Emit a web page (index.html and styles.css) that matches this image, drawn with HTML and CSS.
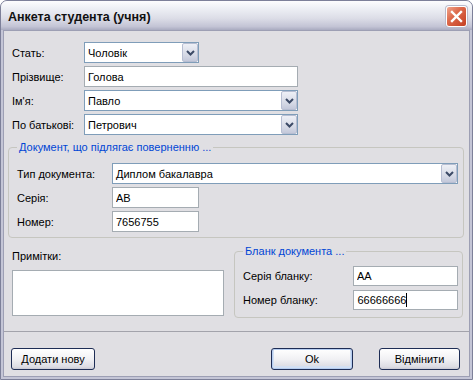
FILE: index.html
```html
<!DOCTYPE html>
<html lang="uk">
<head>
    <meta charset="UTF-8">
    <title>Анкета студента (учня)</title>
    <link rel="stylesheet" href="styles.css">
</head>
<body>
    <div class="window">
        <div class="titlebar">
            <span class="title">Анкета студента (учня)</span>
            <span class="close-btn">
                <svg width="13" height="13" viewBox="0 0 13 13"><path d="M2 2 L11 11 M11 2 L2 11" stroke="#fff" stroke-width="2.4" stroke-linecap="square"/></svg>
            </span>
        </div>
        <div class="client">
            <div class="person">
                <div class="row">
                    <label>Стать:</label>
                    <div class="combo sex"><span>Чоловік</span><span class="drop"><svg width="9" height="6" viewBox="0 0 9 6"><path d="M1 1 L4.5 4.5 L8 1" fill="none" stroke="#3c4a66" stroke-width="2"/></svg></span></div>
                </div>
                <div class="row">
                    <label>Прізвище:</label>
                    <input class="field wide" type="text" value="Голова">
                </div>
                <div class="row">
                    <label>Ім'я:</label>
                    <div class="combo wide"><span>Павло</span><span class="drop"><svg width="9" height="6" viewBox="0 0 9 6"><path d="M1 1 L4.5 4.5 L8 1" fill="none" stroke="#3c4a66" stroke-width="2"/></svg></span></div>
                </div>
                <div class="row">
                    <label>По батькові:</label>
                    <div class="combo wide"><span>Петрович</span><span class="drop"><svg width="9" height="6" viewBox="0 0 9 6"><path d="M1 1 L4.5 4.5 L8 1" fill="none" stroke="#3c4a66" stroke-width="2"/></svg></span></div>
                </div>
            </div>

            <fieldset class="group doc">
                <legend>Документ, що підлягає поверненню ...</legend>
                <div class="row">
                    <label>Тип документа:</label>
                    <div class="combo full"><span>Диплом бакалавра</span><span class="drop"><svg width="9" height="6" viewBox="0 0 9 6"><path d="M1 1 L4.5 4.5 L8 1" fill="none" stroke="#3c4a66" stroke-width="2"/></svg></span></div>
                </div>
                <div class="row">
                    <label>Серія:</label>
                    <input class="field small" type="text" value="АВ">
                </div>
                <div class="row">
                    <label>Номер:</label>
                    <input class="field small" type="text" value="7656755">
                </div>
            </fieldset>

            <div class="bottom">
                <div class="notes">
                    <label>Примітки:</label>
                    <textarea></textarea>
                </div>
                <fieldset class="group blank">
                    <legend>Бланк документа ...</legend>
                    <div class="row">
                        <label>Серія бланку:</label>
                        <input class="field blank-field" type="text" value="АА">
                    </div>
                    <div class="row">
                        <label>Номер бланку:</label>
                        <div class="field blank-field caret-field">66666666<span class="caret"></span></div>
                    </div>
                </fieldset>
            </div>

            <div class="footer">
                <button class="btn add">Додати нову</button>
                <button class="btn ok">Ok</button>
                <button class="btn cancel">Відмінити</button>
            </div>
        </div>
    </div>
</body>
</html>
```

FILE: styles.css
```css
body {
    margin: 0;
    font-family: "Liberation Sans", Arial, sans-serif;
    font-size: 11px;
    color: #000;
    background: #fff;
}

.window {
    width: 473px;
    height: 380px;
    box-sizing: border-box;
    border: 1px solid #7d8099;
    border-radius: 7px 7px 0 0;
    background: #c4c5d6;
    padding: 0 2px 2px;
    display: flex;
    flex-direction: column;
}

.titlebar {
    height: 29px;
    margin: 0 -2px;
    padding: 0 5px 0 7px;
    display: flex;
    align-items: center;
    justify-content: space-between;
    border-radius: 6px 6px 0 0;
    background: linear-gradient(#fdfdfe 0%, #eef0f5 25%, #dcdde7 60%, #c3c4d5 88%, #a9abc0 100%);
}
.title {
    font-size: 12.5px;
    font-weight: bold;
    color: #111;
    padding-top: 2px;
}
.close-btn {
    width: 19px;
    height: 19px;
    margin-top: 2px;
    border: 1px solid #fff;
    border-radius: 3px;
    background: linear-gradient(135deg, #f0a58c 0%, #dd6a4c 40%, #c43f22 100%);
    display: flex;
    align-items: center;
    justify-content: center;
    box-shadow: 0 0 0 1px #b9bbcc;
}

.client {
    flex: 1;
    border: 1px solid #9d9fb4;
    background: #e0dfe3;
    display: flex;
    flex-direction: column;
}

.row {
    display: flex;
    align-items: center;
}

.person {
    padding: 11px 0 0 8px;
    display: flex;
    flex-direction: column;
    gap: 3px;
}
.person label {
    width: 72px;
}

.field {
    box-sizing: border-box;
    height: 21px;
    border: 1px solid #a5acb2;
    background: #fff;
    font: inherit;
    padding: 0 3px;
    margin: 0;
    color: #000;
    outline: none;
}
.combo {
    box-sizing: border-box;
    height: 21px;
    border: 1px solid #7f9db9;
    background: #fff;
    display: flex;
    align-items: center;
    justify-content: space-between;
    padding-left: 3px;
}
.drop {
    box-sizing: border-box;
    width: 16px;
    height: 19px;
    border: 1px solid #b7bed2;
    border-radius: 2px;
    background: linear-gradient(#eef0f6, #d3d7e4 70%, #c3c8da);
    display: flex;
    align-items: center;
    justify-content: center;
}
.sex {
    width: 115px;
}
.wide {
    width: 214px;
}

.group {
    margin: 0;
    border: 1px solid #c6c6c0;
    border-radius: 4px;
    min-width: 0;
}
.group legend {
    padding: 0 2px;
    line-height: 14px;
    color: #0046d5;
}

.doc {
    margin: 5px 5px 0 4px;
    padding: 9px 5px 5px 8px;
    display: flex;
    flex-direction: column;
    gap: 3px;
}
.doc label {
    width: 95px;
}
.full {
    flex: 1;
}
.small {
    width: 87px;
}

.bottom {
    display: flex;
    margin-top: 6px;
    padding: 0 6px 0 8px;
}
.notes {
    width: 212px;
    padding-top: 5px;
    display: flex;
    flex-direction: column;
}
.notes label {
    line-height: 14px;
    margin-bottom: 7px;
}
.notes textarea {
    box-sizing: border-box;
    width: 212px;
    height: 46px;
    border: 1px solid #a5acb2;
    resize: none;
    margin: 0;
}

.blank {
    margin-left: 10px;
    width: 229px;
    box-sizing: border-box;
    padding: 8px 4px 7px 8px;
}
.blank .row + .row {
    margin-top: 4px;
}
.blank label {
    width: 111px;
}
.blank-field {
    width: 105px;
    height: 20px;
}
.caret-field {
    display: flex;
    align-items: center;
}
.caret {
    width: 1px;
    height: 14px;
    background: #000;
}

.footer {
    margin-top: auto;
    border-top: 1px solid #a3a3ab;
    padding: 16px 9px 6px 7px;
    display: flex;
}
.btn {
    box-sizing: border-box;
    height: 22px;
    border: 1px solid #1e2d55;
    border-radius: 3px;
    background: linear-gradient(#ffffff, #f1f1f4 50%, #dcdce3 90%, #c9c9d3);
    font: inherit;
    color: #000;
    padding: 0;
}
.add {
    width: 84px;
}
.ok {
    width: 82px;
    margin-left: auto;
    box-shadow: inset 0 0 0 1px #b6cdf0, inset 0 -1px 0 2px #d3e0f3;
}
.cancel {
    width: 81px;
    margin-left: 26px;
}
```
